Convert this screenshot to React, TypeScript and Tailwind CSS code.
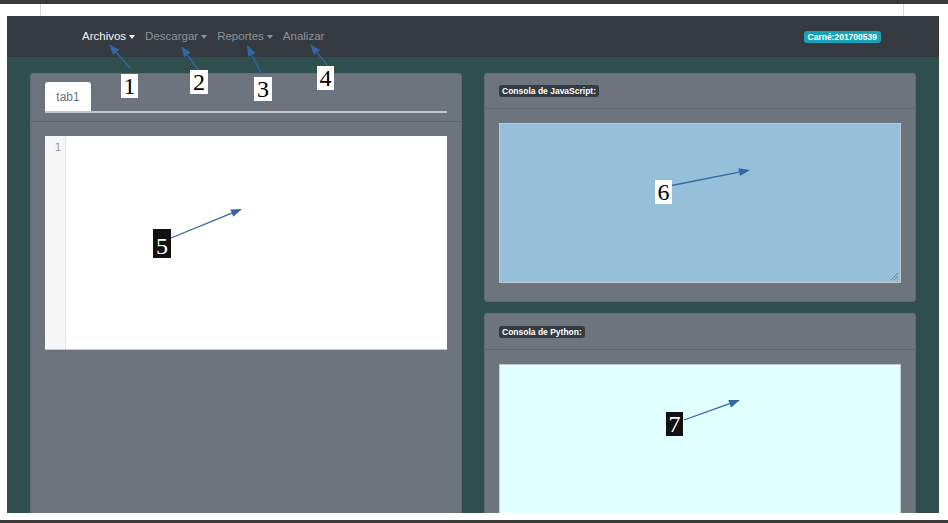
import React from "react";

// annotation arrows drawn over the screenshot: [fromX, fromY, tipX, tipY]
const arrows: [number, number, number, number][] = [
  [130, 68, 109, 44],
  [199, 71, 181, 46],
  [262, 75, 247, 45],
  [328, 66, 310, 44],
  [171, 238, 242, 209],
  [664, 187, 750, 170],
  [684, 420, 740, 400],
];

const markers = [
  { n: "1", x: 121, y: 74, w: 17, h: 24, dark: false },
  { n: "2", x: 190, y: 70, w: 18, h: 24, dark: false },
  { n: "3", x: 254, y: 77, w: 18, h: 24, dark: false },
  { n: "4", x: 317, y: 66, w: 17, h: 24, dark: false },
  { n: "5", x: 153, y: 229, w: 18, h: 29, dark: true },
  { n: "6", x: 655, y: 180, w: 17, h: 24, dark: false },
  { n: "7", x: 666, y: 412, w: 17, h: 24, dark: true },
];

function Arrow({ a }: { a: [number, number, number, number] }) {
  const [x1, y1, x2, y2] = a;
  const dx = x2 - x1;
  const dy = y2 - y1;
  const len = Math.hypot(dx, dy);
  const ux = dx / len;
  const uy = dy / len;
  const hl = 11;
  const hw = 4;
  const bx = x2 - ux * hl;
  const by = y2 - uy * hl;
  const pts = `${x2},${y2} ${bx - uy * hw},${by + ux * hw} ${bx + uy * hw},${by - ux * hw}`;
  return (
    <g>
      <line x1={x1} y1={y1} x2={bx} y2={by} stroke="#3465a4" strokeWidth="1.3" />
      <polygon points={pts} fill="#3465a4" />
    </g>
  );
}

function Caret() {
  return <span className="inline-block ml-[3px] w-0 h-0 border-t-[4px] border-x-[3px] border-x-transparent border-t-current align-middle" />;
}

function Badge({ label }: { label: string }) {
  return (
    <span className="inline-block bg-[#343a40] text-white font-bold text-[8.5px] leading-[12px] px-[3px] rounded-[3px]">
      {label}
    </span>
  );
}

function Grip() {
  return (
    <svg className="absolute right-[1px] bottom-[1px]" width="9" height="9" viewBox="0 0 9 9">
      <path d="M8 1L1 8M8 4L4 8M8 7L7 8" stroke="#6d7f8c" strokeWidth="1" />
    </svg>
  );
}

export default function App() {
  return (
    <div className="relative w-[948px] h-[523px] bg-white overflow-hidden flex flex-col" style={{ fontFamily: '"Liberation Sans", Arial, sans-serif' }}>
      {/* outer frame */}
      <div className="h-[4px] bg-[#3a3a3a] shrink-0" />
      <div className="h-[12px] shrink-0 flex">
        <div className="ml-[40px] mr-[44px] flex-1 border-x border-[#d9d9d9]" />
      </div>

      {/* app window */}
      <div className="ml-[7px] w-[932px] h-[497px] shrink-0 flex flex-col overflow-hidden">
        {/* navbar */}
        <nav className="h-[41px] shrink-0 bg-[#343a40] flex items-center pl-[75px] text-[11.5px]">
          <div className="flex items-center gap-[10px]">
            <span className="text-[#f2f2f2] flex items-center">Archivos<Caret /></span>
            <span className="text-[#8e9297] flex items-center">Descargar<Caret /></span>
            <span className="text-[#8e9297] flex items-center">Reportes<Caret /></span>
            <span className="text-[#8e9297]">Analizar</span>
          </div>
          <span className="ml-auto mr-[58px] bg-[#17a2b8] text-white font-bold text-[8.5px] leading-[12px] px-[4px] rounded-[3px]">
            Carné:201700539
          </span>
        </nav>

        {/* body */}
        <div className="flex-1 bg-[#2f4f4f] px-[23px] pt-[16px] grid grid-cols-2 gap-[22px] overflow-hidden">
          {/* editor card */}
          <div className="bg-[#6c757d] border border-[#646b72] rounded-[3px] h-[480px] flex flex-col">
            <div className="px-[14px] pt-[8px] pb-[8px] border-b border-[#5f666d]">
              <div className="flex items-end border-b-2 border-[#c3c7cb]">
                <div className="w-[46px] h-[29px] bg-white rounded-t-[3px] flex items-center justify-center text-[12px] text-[#6c757d]">
                  tab1
                </div>
              </div>
            </div>
            <div className="px-[14px] pt-[14px]">
              <div className="h-[214px] bg-white flex border-b border-[#c9c9c9]">
                <div className="w-[21px] bg-[#f7f7f7] border-r border-[#e3e3e3] text-right pr-[4px] pt-[5px] text-[11px] leading-[14px] text-[#999]" style={{ fontFamily: '"DejaVu Sans Mono", monospace' }}>
                  1
                </div>
                <div className="flex-1" />
              </div>
            </div>
          </div>

          {/* consoles */}
          <div className="flex flex-col gap-[11px]">
            <div className="bg-[#6c757d] border border-[#646b72] rounded-[3px]">
              <div className="h-[35px] px-[14px] flex items-center border-b border-[#5f666d]">
                <Badge label="Consola de JavaScript:" />
              </div>
              <div className="px-[14px] pt-[14px] pb-[18px]">
                <div className="relative h-[160px] bg-[#96bfd9] border border-[#c4c9cc]">
                  <Grip />
                </div>
              </div>
            </div>
            <div className="bg-[#6c757d] border border-[#646b72] rounded-[3px] h-[300px]">
              <div className="h-[36px] px-[14px] flex items-center border-b border-[#5f666d]">
                <Badge label="Consola de Python:" />
              </div>
              <div className="px-[14px] pt-[14px]">
                <div className="h-[220px] bg-[#e0ffff] border border-[#c4c9cc]" />
              </div>
            </div>
          </div>
        </div>
      </div>

      <div className="h-[7px] shrink-0" />
      <div className="h-[3px] bg-[#3a3a3a] shrink-0" />

      {/* annotations */}
      <svg className="absolute inset-0 pointer-events-none" width="948" height="523">
        {arrows.map((a, i) => (
          <Arrow key={i} a={a} />
        ))}
      </svg>
      {markers.map((m) => (
        <div
          key={m.n}
          className={`absolute flex items-end justify-center text-[24px] leading-[24px] ${m.dark ? "bg-[#111] text-white" : "bg-white text-black"}`}
          style={{ left: m.x, top: m.y, width: m.w, height: m.h, fontFamily: '"Liberation Serif", "Times New Roman", serif' }}
        >
          {m.n}
        </div>
      ))}
    </div>
  );
}
